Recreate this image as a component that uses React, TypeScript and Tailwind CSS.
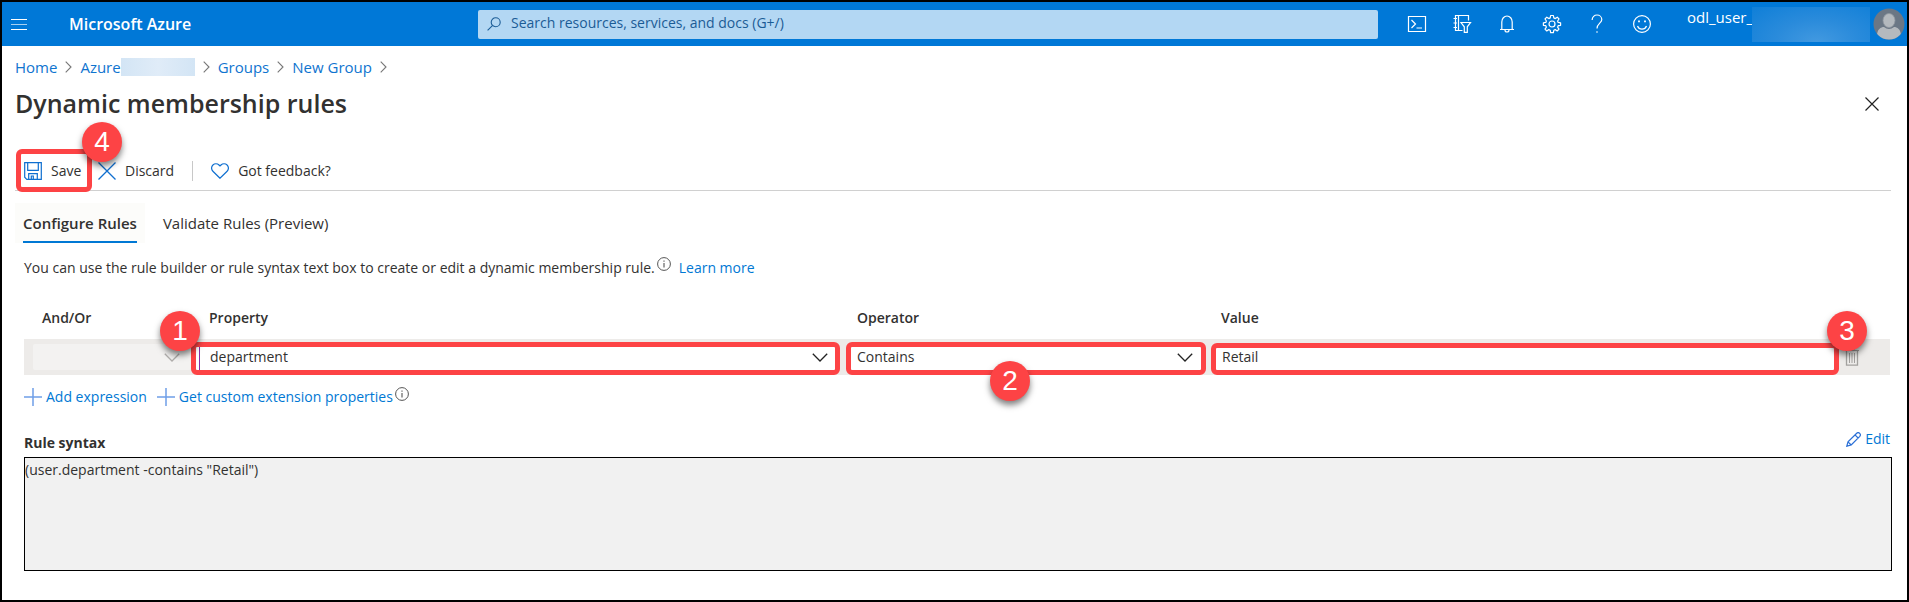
import type { ReactNode } from "react";

const focusless = "outline-none";

function Badge({ n, className }: { n: number; className: string }) {
  return (
    <span
      className={`absolute z-10 flex size-10 items-center justify-center rounded-full bg-[#fd4345] font-['Liberation_Sans',sans-serif] text-[28px] text-white shadow-[0_4px_6px_rgba(0,0,0,0.5)] ${className}`}
    >
      {n}
    </span>
  );
}

function Chevron({ className }: { className: string }) {
  return (
    <svg viewBox="0 0 16 9" className={`pointer-events-none absolute h-[9px] w-4 ${className}`} fill="none" stroke="currentColor" strokeWidth="1.3">
      <path d="M0.8 0.8L8 8L15.2 0.8" />
    </svg>
  );
}

function CrumbArrow() {
  return (
    <svg viewBox="0 0 7 12" className="h-3 w-[7px] text-[#777]" fill="none" stroke="currentColor" strokeWidth="1.1">
      <path d="M0.7 0.7L6 6L0.7 11.3" />
    </svg>
  );
}

function Info() {
  return (
    <svg viewBox="0 0 14 14" className="size-[14px] text-[#555]" fill="none" stroke="currentColor">
      <circle cx="7" cy="7" r="6.4" strokeWidth="1" />
      <path d="M7 6V10.4M7 3.6V4.8" strokeWidth="1.1" />
    </svg>
  );
}

function Plus() {
  return (
    <svg viewBox="0 0 18 18" className="size-[18px] text-[#6f9fe8]" stroke="currentColor" strokeWidth="1.5">
      <path d="M9 0V18M0 9H18" />
    </svg>
  );
}

function HeaderButton({ label, children }: { label: string; children: ReactNode }) {
  return (
    <button type="button" aria-label={label} className="flex h-11 w-[45px] items-center justify-center text-white">
      <svg viewBox="0 0 20 20" className="size-5" fill="none" stroke="currentColor" strokeWidth="1.2">
        {children}
      </svg>
    </button>
  );
}

function Header() {
  return (
    <header className="flex h-11 items-center bg-[#0078d7] text-white">
      <button type="button" aria-label="Show portal menu" className="ml-2 flex h-11 w-[18px] items-center justify-center">
        <svg viewBox="0 0 16 11" className="h-[11px] w-4" stroke="currentColor">
          <path d="M0 0.5H16M0 10.5H16" />
          <path d="M0 5.5H16" opacity="0.65" />
        </svg>
      </button>
      <a href="#home" className="ml-[41px] w-[409px] shrink text-base font-semibold">Microsoft Azure</a>
      <label className="flex h-[29px] min-w-0 flex-1 items-center gap-[10px] rounded-xs bg-[#b3d7f3] pl-[9px] text-[#1b5c96]">
        <svg viewBox="0 0 14 14" className="size-[14px]" fill="none" stroke="currentColor" strokeWidth="1.1">
          <circle cx="8.7" cy="5.3" r="4.5" />
          <path d="M5.4 8.6L0.6 13.4" />
        </svg>
        <input
          type="search"
          aria-label="Search"
          placeholder="Search resources, services, and docs (G+/)"
          className={`min-w-0 flex-1 bg-transparent pb-[2px] text-sm placeholder:text-[#1b5c96] ${focusless}`}
        />
      </label>
      <nav className="ml-4 flex">
        <HeaderButton label="Cloud Shell">
          <path d="M1.5 2.5H18.5V17.5H1.5Z" />
          <path d="M4.5 6L8.5 10L4.5 14M9.5 14H15" />
        </HeaderButton>
        <HeaderButton label="Directories and subscriptions">
          <path d="M10.5 16.5H3.5V1.5H16.5V6.5M6.5 1.5V16.5M1.5 4.5H5M1.5 9H5M1.5 13.5H5" />
          <path d="M9 8.5H18.5L15.3 12.8V18.3H12.3V12.8Z" />
        </HeaderButton>
        <HeaderButton label="Notifications">
          <path d="M4.8 15.5V8A5.2 6 0 0 1 15.2 8V15.5M3 15.5H17M8 16A2 2 0 0 0 12 16" />
        </HeaderButton>
        <HeaderButton label="Settings">
          <path d="M8.6 1.5H11.4L11.8 3.9L13.3 4.6L15.3 3.2L17 5L15.6 7L16.2 8.4L18.6 8.8V11.3L16.2 11.7L15.6 13.2L17 15.2L15.2 17L13.2 15.6L11.8 16.2L11.4 18.6H8.6L8.2 16.2L6.8 15.6L4.8 17L3 15.2L4.4 13.2L3.8 11.7L1.4 11.3V8.8L3.8 8.4L4.4 7L3 5L4.8 3.2L6.8 4.6L8.2 3.9Z" strokeLinejoin="round" />
          <circle cx="10" cy="10" r="3" />
        </HeaderButton>
        <HeaderButton label="Help">
          <path d="M5.2 6V5.5A4.8 4.5 0 0 1 14.8 5.5C14.8 9 10 9.5 10 14.5M10 17.2V18.8" />
        </HeaderButton>
        <HeaderButton label="Feedback">
          <circle cx="10" cy="10" r="8.4" />
          <path d="M5.5 12A4.8 4.8 0 0 0 14.5 12" />
          <path d="M7 6.5V8.3M13 6.5V8.3" strokeWidth="1.8" />
        </HeaderButton>
      </nav>
      <button type="button" aria-label="Account" className="ml-[23px] flex h-11 items-center">
        <span className="w-[65px] self-start pt-1 text-left text-[15px]">odl_user_</span>
        <span className="h-[35px] w-[118px] bg-[radial-gradient(ellipse_at_55%_100%,#4299e0_0%,#2a8bdb_45%,#0f7fd8_100%)]" />
        <svg viewBox="0 0 32 32" className="mr-[2px] ml-[3px] size-8">
          <clipPath id="avatar"><circle cx="16" cy="16" r="15.5" /></clipPath>
          <g clipPath="url(#avatar)">
            <rect width="32" height="32" fill="#6b7785" />
            <path d="M4 28C4 21 8 19 11 19C14 21.5 18 21.5 21 19C24 19 28 21 28 28V32H4Z" fill="#b4b9be" />
            <ellipse cx="16" cy="12.5" rx="6" ry="7" fill="#b4b9be" stroke="#8f979f" strokeWidth="0.8" />
          </g>
        </svg>
      </button>
    </header>
  );
}

function Toolbar() {
  return (
    <div className="mr-4 ml-[13px] flex h-10 items-center border-b border-[#d0d0d0] text-sm">
      <div className="relative ml-px flex h-[43px] w-[76px] items-center rounded-md border-5 border-[#fd4345]">
        <button type="button" className="flex items-center gap-[9px] pl-[3px] whitespace-nowrap">
          <svg viewBox="0 0 18 18" className="size-[18px] text-[#0f6fd0]" fill="none" stroke="currentColor" strokeWidth="1.2">
            <path d="M0.7 0.7H17.3V17.3H2.8L0.7 15.2Z" />
            <path d="M3.7 0.7V8.3H14.3V0.7M4.7 17V11.7H13.3V17M7.3 17V14H9.3V17" />
          </svg>
          Save
        </button>
        <Badge n={4} className="-top-8 left-[61px]" />
      </div>
      <button type="button" className="ml-[6px] flex items-center gap-[9px]">
        <svg viewBox="0 0 18 18" className="size-[18px] text-[#0f6fd0]" stroke="currentColor" strokeWidth="1.3">
          <path d="M0.5 0.5L17.5 17.5M17.5 0.5L0.5 17.5" />
        </svg>
        Discard
      </button>
      <span className="mx-[18px] h-5 w-px bg-[#c8c8c8]" />
      <button type="button" className="flex items-center gap-[9px]">
        <svg viewBox="0 0 18 16" className="h-4 w-[18px] text-[#0f6fd0]" fill="none" stroke="currentColor" strokeWidth="1.2">
          <path d="M9 15.2L1.9 8.2A4.3 4.3 0 0 1 1.9 2A4.3 4.3 0 0 1 8 2L9 3L10 2A4.3 4.3 0 0 1 16.1 2A4.3 4.3 0 0 1 16.1 8.2Z" />
        </svg>
        Got feedback?
      </button>
    </div>
  );
}

const rowGrid = "grid grid-cols-[167px_655fr_365fr_628fr_51px]";

function RuleTable() {
  return (
    <table className="block text-sm">
      <thead className="block">
        <tr className={`${rowGrid} h-10 items-center pb-[2px] text-left [&>th]:font-semibold`}>
          <th className="pl-[18px]">And/Or</th>
          <th className="pl-[18px]">Property</th>
          <th className="pl-[11px]">Operator</th>
          <th className="pl-[10px]">Value</th>
          <th aria-label="Delete" />
        </tr>
      </thead>
      <tbody className="block">
        <tr className={`${rowGrid} h-9 bg-[#edebe9]`}>
          <td className="relative py-[5px] pl-[9px]">
            <select aria-label="And/Or" disabled className="h-[26px] w-full appearance-none rounded-xs bg-[#f3f2f1]" />
            <Chevron className="top-[14px] right-[11px] text-[#b0aeac]" />
          </td>
          <td className="relative pt-[3px] pr-[6px]">
            <div className="h-[33px] rounded-md border-5 border-[#fd4345] bg-white pl-[3px]">
              <select aria-label="Property" defaultValue="department" className={`block h-full w-full appearance-none border-l border-[#8a2da5] pb-[3px] pl-[10px] ${focusless}`}>
                <option>department</option>
              </select>
            </div>
            <Chevron className="top-[14px] right-[18px] text-[#222]" />
            <Badge n={1} className="-top-7 -left-[31px]" />
          </td>
          <td className="relative pt-[3px] pr-[5px]">
            <div className="h-[33px] rounded-md border-5 border-[#fd4345] bg-white">
              <select aria-label="Operator" defaultValue="Contains" className={`block h-full w-full appearance-none pb-[3px] pl-[6px] ${focusless}`}>
                <option>Contains</option>
              </select>
            </div>
            <Chevron className="top-[14px] right-[18px] text-[#222]" />
            <Badge n={2} className="top-[22px] left-[144px]" />
          </td>
          <td className="relative pt-1">
            <div className="h-8 rounded-md border-5 border-[#fd4345] bg-white">
              <input type="text" aria-label="Value" defaultValue="Retail" className={`block h-[18px] w-full pl-[6px] ${focusless}`} />
            </div>
            <Badge n={3} className="-top-7 -right-7" />
          </td>
          <td className="pt-[9px] pl-[6px]">
            <button type="button" aria-label="Delete expression" className="block">
              <svg viewBox="0 0 14 18" className="h-[18px] w-[14px]" fill="none" stroke="#a3a19f">
                <path d="M0 2.5H14M5 2V0.5H9V2" />
                <path d="M1.5 3V17.2H12.5V3" strokeWidth="1.3" />
                <path d="M4.5 5V15M7 5V15M9.5 5V15" />
              </svg>
            </button>
          </td>
        </tr>
      </tbody>
    </table>
  );
}

export default function App() {
  return (
    <div className="min-h-screen border-2 border-black bg-white font-['Open_Sans','Noto_Sans',sans-serif] text-[#323130]">
      <Header />
      <nav aria-label="Breadcrumb" className="flex h-11 items-center gap-2 pb-[2px] pl-[13px] text-[15px] text-[#0f74cf]">
        <a href="#home">Home</a>
        <CrumbArrow />
        <span className="flex items-center">
          <a href="#azure">Azure</a>
          <span className="h-[18px] w-[74px] bg-linear-to-r from-[#d3e5f5] via-[#e0ecf8] to-[#d3e5f5]" />
        </span>
        <CrumbArrow />
        <a href="#groups">Groups</a>
        <CrumbArrow />
        <a href="#new-group">New Group</a>
        <CrumbArrow />
      </nav>
      <div className="flex h-7 items-center justify-between pr-[28px] pl-[13px]">
        <h1 className="text-[25px] font-semibold">Dynamic membership rules</h1>
        <button type="button" aria-label="Close">
          <svg viewBox="0 0 14 14" className="size-[14px]" stroke="#222" strokeWidth="1.2">
            <path d="M0.5 0.5L13.5 13.5M13.5 0.5L0.5 13.5" />
          </svg>
        </button>
      </div>
      <div className="pt-[33px]">
        <Toolbar />
      </div>
      <main className="pr-[17px] pl-[22px]">
        <div role="tablist" className="-ml-[9px] flex pt-3 text-[15px]">
          <button type="button" role="tab" aria-selected="true" className="bg-[#fcfcfa] px-2">
            <span className="block h-10 border-b-2 border-[#0078d4] leading-10 font-semibold">Configure Rules</span>
          </button>
          <button type="button" role="tab" aria-selected="false" className="ml-[18px] h-10">Validate Rules (Preview)</button>
        </div>
        <p className="flex h-[50px] items-center text-sm">
          You can use the rule builder or rule syntax text box to create or edit a dynamic membership rule.
          <span className="mr-2 mb-2 ml-[2px]"><Info /></span>
          <a href="#learn" className="text-[#0078d4]">Learn more</a>
        </p>
        <div className="pt-[6px]">
          <RuleTable />
        </div>
        <div className="flex h-11 items-center text-sm text-[#0078d4]">
          <button type="button" className="flex items-center gap-1"><Plus />Add expression</button>
          <button type="button" className="ml-[10px] flex items-center gap-1"><Plus />Get custom extension properties</button>
          <span className="mb-[6px] ml-[2px]"><Info /></span>
        </div>
        <div className="flex h-[38px] items-end justify-between pb-1 text-sm">
          <label htmlFor="syntax" className="font-bold">Rule syntax</label>
          <button type="button" className="flex items-center gap-1 pb-1 text-[#0078d4]">
            <svg viewBox="0 0 15 15" className="size-[15px] text-[#2a6fd6]" fill="none" stroke="currentColor" strokeWidth="1.2">
              <path d="M0.8 14.2L2 9.8L10.7 1.2A2.2 2.2 0 0 1 13.8 4.3L5.2 13ZM9 2.9L12.1 6M2 9.8L5.2 13" />
            </svg>
            Edit
          </button>
        </div>
        <textarea
          id="syntax"
          readOnly
          value={'(user.department -contains "Retail")'}
          className={`-mr-[2px] block h-[114px] w-[calc(100%+2px)] resize-none border border-black bg-[#f1f1f1] pt-[2px] text-sm ${focusless}`}
        />
      </main>
    </div>
  );
}
